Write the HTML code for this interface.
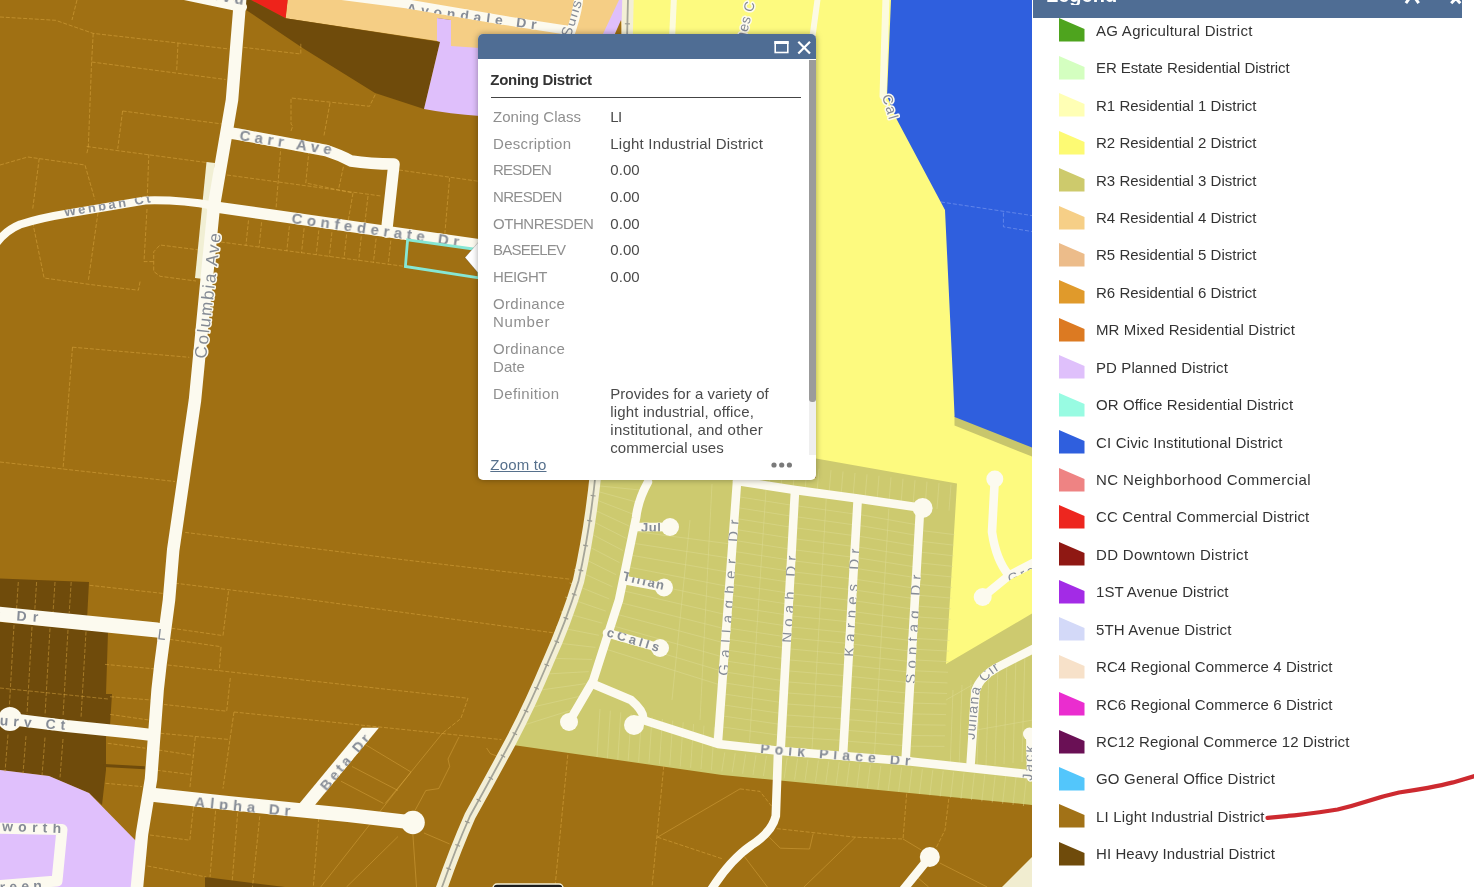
<!DOCTYPE html>
<html><head><meta charset="utf-8">
<style>
html,body{margin:0;padding:0;}
body{width:1474px;height:887px;overflow:hidden;position:relative;background:#fff;font-family:"Liberation Sans",sans-serif;}
#map{will-change:transform;position:absolute;left:0;top:0;width:1032px;height:887px;}
#legend{will-change:transform;position:absolute;left:1033px;top:0;width:441px;height:887px;background:#fff;}
#lhead{position:absolute;left:0;top:0;width:429px;height:17.5px;background:#4f6d94;overflow:hidden;}
.lrow{position:absolute;left:0;height:24px;}
.lrow svg{position:absolute;left:26px;top:0;}
.lrow span{position:absolute;left:63px;top:2.4px;white-space:nowrap;font-size:15px;color:#333;line-height:20px;letter-spacing:0.1px;}
#popup{will-change:transform;position:absolute;left:478px;top:34px;width:338px;height:446px;background:#fff;border-radius:5px;box-shadow:0 0 6px rgba(0,0,0,.35);overflow:hidden;}
#phead{position:absolute;left:0;top:0;width:338px;height:25px;background:#4f6d94;}
.pl{position:absolute;left:15px;font-size:15px;color:#8f8f8f;line-height:18px;white-space:nowrap;}
.pv{position:absolute;left:132px;font-size:15px;color:#4a4a4a;line-height:18px;white-space:nowrap;}
</style></head><body>
<svg id="map" width="1032" height="887" viewBox="0 0 1032 887">
<defs>
<style>
.rd{fill:none;stroke:#fcfaef;stroke-linecap:round;stroke-linejoin:round;}
.pl1{fill:none;stroke:#e3ae48;stroke-width:0.75;stroke-dasharray:4 1.8;opacity:.62;}
.pl2{fill:none;stroke:#dedb93;stroke-width:0.8;opacity:.6;}
.lb{font-family:"Liberation Sans",sans-serif;font-size:15px;fill:#848a94;stroke:#fcfaef;stroke-width:3px;paint-order:stroke;stroke-linejoin:round;font-weight:bold;}
</style>
</defs>
<rect x="0" y="0" width="1033" height="887" fill="#a07013"/>
<!-- R4 orange -->
<polygon points="287.5,0 626,0 626,60 451,60 451,20 437,18 437,41 285.6,18.3" fill="#f5ce85"/>
<!-- red -->
<polygon points="251,0 287.7,0 285.6,18.5" fill="#ee231b"/>
<!-- HI dark top -->
<polygon points="245,0 251,0 285.6,18.3 440,42 424,109 375,93 303,48.2 246.5,10.2" fill="#6f4b0b"/>
<!-- PD lavender top -->
<path d="M437,18 L451,20 L451,46 L480,48 L480,116 Q450,114 424,109 L440,42 L437,41Z" fill="#dfbffb"/>
<polygon points="619,0 624,0 622,20 614,36 602,36" fill="#dfbffb"/>
<polygon points="614,36 621,20 622,36" fill="#a07013"/>
<!-- R2 yellow -->
<polygon points="632,0 1033,0 1033,620 946,666 946,500 816,475 816,36 632,36" fill="#fdfa7f"/>
<!-- R3 olive -->
<path d="M594,478 L816,478 L816,458.5 L957,483.5 L946,664 L1033,613 L1033,805 L722,775 L513,745 Q535,705 548,662 Q568,620 578,581 Q588,530 594,478Z" fill="#cdca6f"/>
<!-- olive strip under blue -->
<polygon points="954.5,416 1033,447 1033,457 954.5,425.5" fill="#c8c66c"/>
<!-- CI blue -->
<polygon points="891,0 1033,0 1033,448 954.6,417 953,380 945,210 896,118 887,96" fill="#2f5fde"/>
<!-- HI dark bottom-left -->
<polygon points="0,578.5 89,582 87,620 0,612" fill="#6f4b0b"/>
<polygon points="0,622 108,632 106,694 112,694 110,726 106,726 106,770 102,805 89,793 49,776 0,770" fill="#6f4b0b"/>
<rect x="104" y="764" width="41" height="3" fill="#6f4b0b" transform="rotate(3 104 764)"/>
<polygon points="205,877 285,887 205,887" fill="#6f4b0b"/>
<!-- PD lavender bottom-left -->
<path d="M0,770 L49,776 L89,793 L137,842 L133,887 L0,887Z" fill="#e0c0fc"/>
<!-- cream bottom-right -->
<polygon points="1002,887 1033,856 1033,887" fill="#f1edd0"/>
<path class="pl1" d="M0.0,17.0 L55.6,20.3 L93.2,33.4 L178.0,43.0 L229.0,49.0 M77.0,0.0 L72.0,20.0 M93.2,33.4 L91.6,62.0 L88.3,147.0 L86.7,154.0 M91.6,62.0 L225.6,79.5 M178.0,43.0 L176.6,72.0 M122.6,111.0 L222.4,124.0 M122.6,111.0 L117.7,148.8 M86.7,146.5 L209.3,162.9 M148.8,154.3 L147.2,199.5 M0.0,165.0 L27.8,157.0 L85.0,165.0 L94.8,199.5 M39.2,158.6 L32.7,209.0 M32.7,222.4 L44.1,278.0 L90.0,284.5 L138.4,290.2 L140.4,280.0 M98.0,212.6 L88.3,281.0 M147.0,209.0 L144.0,261.6 L153.7,261.6 M199.5,250.0 L160.0,245.0 L153.7,251.8 L153.7,271.4 L160.0,276.3 L196.0,281.0 M243.6,47.4 L300.8,54.0 L300.8,42.5 M291.0,131.0 L292.7,126.0 L291.0,124.0 L291.0,98.0 L369.5,106.3 L376.0,93.0 M330.0,103.0 L323.7,137.0 M227.0,175.0 L381.0,196.0 M281.0,145.5 L276.0,209.0 M309.0,150.4 L305.8,183.0 L353.0,193.0 L348.0,222.0 M343.4,166.8 L338.5,189.7 M368.0,196.0 L364.6,225.6 M399.0,170.0 L480.0,181.5 M449.6,178.0 L444.7,235.4 M220.7,242.0 L405.5,266.5 M248.5,220.4 L245.9,245.7 M261.6,222.3 L259.0,247.4 M289.4,226.2 L286.8,251.1 M304.1,228.3 L301.5,253.1 M318.8,230.4 L316.2,255.0 M331.9,232.3 L329.3,256.8 M346.6,234.4 L344.0,258.7 M361.3,236.4 L358.7,260.7 M376.1,238.5 L373.4,262.6 M390.8,240.6 L388.2,264.6 M72.5,347.2 L189.3,357.3 M72.5,347.2 L63.0,469.3 M0.0,462.0 L175.0,481.5 M185.2,532.4 L405.5,560.0 L570.0,579.2 M89.5,585.3 L162.8,593.4 M175.0,583.2 L293.0,597.5 L560.0,633.7 M18.3,582.0 L16.3,613.0 M36.6,582.0 L34.6,613.0 M55.0,582.0 L53.0,613.0 M71.2,582.0 L69.2,613.0 M14.0,625.1 L9.0,712.8 M32.0,626.7 L27.0,714.1 M50.0,628.3 L45.0,715.4 M68.0,629.9 L63.0,716.6 M86.0,631.6 L81.0,717.9 M0.0,688.0 L108.0,699.0 M8.0,734.6 L5.0,771.8 M26.0,736.1 L23.0,773.6 M45.0,737.6 L42.0,775.5 M63.0,739.0 L60.0,777.3 M228.5,591.3 L223.0,635.6 L171.3,628.2 M169.5,639.3 L221.0,646.7 L219.3,670.6 M167.7,665.0 L468.0,698.3 L460.8,718.6 L442.4,733.3 M230.3,678.0 L226.7,711.2 L164.0,704.5 M234.0,712.0 L501.4,739.6 M234.0,712.0 L230.3,737.0 L223.0,788.6 M160.3,733.3 L230.3,739.6 M195.3,737.0 L189.8,788.6 M158.4,750.0 L193.5,755.4 M156.6,770.2 L191.6,774.6 M193.5,807.0 L189.8,840.2 L147.4,834.7 M215.6,810.7 L210.0,877.0 M237.7,812.6 L232.2,880.8 M259.8,816.3 L252.5,887.0 M147.4,866.0 L206.4,877.0 M318.8,818.0 L313.3,887.0 M110.0,696.7 L151.0,700.0 M110.0,714.4 L148.8,720.0 M107.7,743.3 L145.4,748.2 M105.5,783.3 L142.0,786.6 M105.0,664.4 L154.0,668.8 M567.8,754.8 L555.0,887.0 M663.8,765.8 L652.0,887.0 M740.0,788.9 L760.0,791.4 L773.0,808.0 M657.5,837.2 L723.5,859.2 M771.0,828.0 L855.4,837.2 L903.0,839.0 L906.7,793.3 M948.8,798.8 L945.0,830.0 L936.0,848.2"/>
<path class="pl1" style="stroke-dasharray:none;opacity:.55" d="M365.0,744.4 L411.0,772.0 L385.2,803.4 M352.0,766.5 L398.0,790.5 M341.0,781.2 L383.4,803.4 M442.4,733.3 L411.0,772.0 L320.7,887.0 M459.0,737.0 L448.0,759.0 L449.7,766.5 L438.7,788.6 L425.8,790.5 L412.9,814.4 M486.6,748.0 L490.3,753.6 L505.0,759.0 M424.0,833.0 L449.7,844.0 M412.9,834.7 L416.5,887.0 M398.0,836.5 L346.5,887.0 M657.5,837.2 L740.0,788.9 M769.3,837.2 L780.3,848.2 L809.6,849.0 L813.2,833.6 M743.6,855.5 L767.4,887.0 M855.4,837.2 L804.0,887.0 M903.0,839.0 L921.3,850.0 M939.6,862.9 L987.2,887.0 M917.6,877.5 L928.6,887.0"/>
<path d="M941,202 L1033,215.7 M1003.4,212.7 L1003.4,226.8 L1033,231.7" fill="none" stroke="#7d9bf0" stroke-width="0.8" stroke-dasharray="4 2" opacity=".8"/>
<polygon points="206.5,162 215,163 203.5,279 195,278" fill="#f1efd4"/>
<path class="pl2" d="M740.2,497.0 L790.4,505.0 M739.3,507.9 L789.8,515.9 M738.5,518.9 L789.2,526.9 M737.7,529.8 L788.6,537.8 M736.9,540.8 L788.0,548.8 M736.0,551.7 L787.3,559.7 M735.2,562.7 L786.7,570.7 M734.4,573.7 L786.1,581.7 M733.6,584.6 L785.5,592.6 M732.7,595.6 L784.9,603.6 M731.9,606.5 L784.3,614.5 M731.1,617.5 L783.7,625.5 M730.3,628.4 L783.1,636.4 M729.4,639.4 L782.5,647.4 M728.6,650.3 L781.9,658.3 M727.8,661.3 L781.3,669.3 M727.0,672.3 L780.7,680.3 M726.1,683.2 L780.0,691.2 M725.3,694.2 L779.4,702.2 M724.5,705.1 L778.8,713.1 M723.7,716.1 L778.2,724.1 M722.8,727.0 L777.6,735.0 M766.0,490.0 L749.5,742.0 M798.4,506.0 L852.9,513.8 M797.8,517.0 L852.2,524.6 M797.2,528.0 L851.6,535.3 M796.6,539.0 L851.0,546.1 M796.0,550.0 L850.3,556.9 M795.3,561.0 L849.7,567.7 M794.7,572.0 L849.1,578.5 M794.1,583.0 L848.5,589.3 M793.5,594.0 L847.8,600.0 M792.9,605.0 L847.2,610.8 M792.3,616.0 L846.6,621.6 M791.7,627.0 L845.9,632.4 M791.1,638.0 L845.3,643.2 M790.5,649.0 L844.7,654.0 M789.9,660.0 L844.0,664.7 M789.3,671.0 L843.4,675.5 M788.7,682.0 L842.8,686.3 M788.0,693.0 L842.2,697.1 M787.4,704.0 L841.5,707.9 M786.8,715.0 L840.9,718.7 M786.2,726.0 L840.3,729.4 M785.6,737.0 L839.6,740.2 M826.2,499.0 L812.0,749.5 M860.9,514.8 L915.4,524.5 M860.2,525.6 L914.8,535.0 M859.6,536.3 L914.2,545.6 M859.0,547.1 L913.6,556.1 M858.3,557.9 L913.0,566.6 M857.7,568.7 L912.3,577.1 M857.1,579.5 L911.7,587.7 M856.5,590.3 L911.1,598.2 M855.8,601.0 L910.5,608.7 M855.2,611.8 L909.9,619.2 M854.6,622.6 L909.3,629.7 M853.9,633.4 L908.7,640.3 M853.3,644.2 L908.1,650.8 M852.7,655.0 L907.5,661.3 M852.0,665.7 L906.9,671.8 M851.4,676.5 L906.3,682.3 M850.8,687.3 L905.7,692.9 M850.2,698.1 L905.0,703.4 M849.5,708.9 L904.4,713.9 M848.9,719.7 L903.8,724.4 M848.3,730.4 L903.2,735.0 M847.6,741.2 L902.6,745.5 M888.8,509.0 L874.5,754.0 M923.4,530.8 L954.5,534.6 M922.7,541.5 L954.0,545.2 M922.1,552.3 L953.5,555.8 M921.5,563.1 L953.0,566.4 M920.8,573.9 L952.5,577.0 M920.2,584.6 L952.0,587.5 M919.5,595.4 L951.5,598.1 M918.9,606.2 L951.0,608.7 M918.3,617.0 L950.5,619.3 M917.6,627.7 L950.0,629.9 M917.0,638.5 L949.5,640.5 M916.4,649.3 L949.0,651.1 M915.7,660.0 L948.5,661.7 M915.1,670.8 L948.0,672.3 M914.5,681.6 L947.5,682.9 M913.8,692.4 L947.0,693.5 M913.2,703.1 L946.5,704.0 M912.5,713.9 L946.0,714.6 M911.9,724.7 L945.5,725.2 M911.3,735.5 L945.0,735.8 M910.6,746.2 L944.5,746.4 M747.0,460.0 L745.0,482.0 M759.0,461.4 L757.0,483.7 M771.0,462.9 L769.0,485.4 M783.0,464.3 L781.0,487.0 M795.0,465.8 L793.0,488.7 M807.0,467.2 L805.0,490.4 M819.0,468.6 L817.0,492.1 M831.0,470.1 L829.0,493.8 M843.0,471.5 L841.0,495.4 M855.0,473.0 L853.0,497.1 M867.0,474.4 L865.0,498.8 M879.0,475.8 L877.0,500.5 M891.0,477.3 L889.0,502.2 M903.0,478.7 L901.0,503.8 M915.0,480.2 L913.0,505.5 M927.0,481.6 L925.0,507.2 M939.0,483.0 L937.0,508.9 M951.0,484.5 L949.0,510.6 M636.7,531.7 L732.1,544.2 M633.3,543.3 L731.2,558.3 M630.0,555.0 L730.2,572.5 M626.7,566.7 L729.3,586.7 M623.3,578.3 L728.4,600.8 M620.0,590.0 L727.5,615.0 M616.7,601.7 L726.6,629.2 M613.3,613.3 L725.7,643.3 M610.0,625.0 L724.8,657.5 M606.7,636.7 L723.8,671.7 M603.3,648.3 L722.9,685.8 M690.0,520.0 L672.0,700.0 M712.0,484.0 L700.0,720.0 M600.0,709.0 L597.0,757.0 M610.4,710.7 L607.4,758.2 M620.8,712.3 L617.8,759.4 M631.2,714.0 L628.2,760.6 M641.6,715.7 L638.6,761.8 M652.0,717.3 L649.0,763.0 M662.4,719.0 L659.4,764.2 M672.8,720.6 L669.8,765.4 M683.2,722.3 L680.2,766.6 M693.6,724.0 L690.6,767.8 M704.0,725.6 L701.0,769.0 M714.4,727.3 L711.4,770.2 M724.8,752.4 L721.8,771.4 M735.2,753.3 L732.2,772.5 M745.6,754.2 L742.6,773.7 M756.0,755.1 L753.0,774.9 M766.4,755.9 L763.4,776.1 M776.8,756.8 L773.8,777.3 M787.2,757.7 L784.2,778.5 M797.6,758.6 L794.6,779.7 M808.0,759.5 L805.0,780.9 M818.4,760.4 L815.4,782.1 M828.8,761.2 L825.8,783.3 M839.2,762.1 L836.2,784.5 M849.6,763.0 L846.6,785.7 M860.0,763.9 L857.0,786.9 M870.4,764.8 L867.4,788.1 M880.8,765.7 L877.8,789.3 M891.2,766.6 L888.2,790.5 M901.6,767.4 L898.6,791.7 M912.0,768.3 L909.0,792.9 M922.4,769.2 L919.4,794.1 M932.8,770.1 L929.8,795.3 M943.2,771.0 L940.2,796.5 M953.6,771.9 L950.6,797.7 M964.0,772.7 L961.0,798.9 M974.4,773.6 L971.4,800.1 M984.8,774.5 L981.8,801.3 M995.2,775.4 L992.2,802.4 M1005.6,776.3 L1002.6,803.6 M1016.0,777.2 L1013.0,804.8 M1026.4,778.0 L1023.4,806.0 M600.0,486.0 L640.0,490.0 M598.3,491.6 L636.6,502.1 M595.7,499.7 L633.2,514.2 M592.7,509.2 L629.7,526.3 M589.4,519.8 L626.3,538.4 M585.9,531.1 L622.9,550.5 M582.1,543.2 L619.5,562.6 M578.2,555.9 L616.1,574.7 M574.0,569.2 L612.6,586.8 M569.7,582.9 L609.2,598.9 M565.3,597.1 L605.8,611.1 M560.7,611.8 L602.4,623.2 M556.0,626.9 L598.9,635.3 M551.2,642.3 L595.5,647.4 M546.2,658.1 L592.1,659.5 M541.2,674.3 L588.7,671.6 M536.0,690.7 L585.3,683.7 M530.8,707.5 L581.8,695.8 M525.4,724.6 L578.4,707.9 M950.0,770.0 L953.0,690.0 M959.0,769.0 L962.0,685.0 M968.0,768.0 L971.0,680.0 M977.0,767.0 L980.0,675.0 M986.0,766.0 L989.0,670.0 M995.0,765.0 L998.0,665.0 M1004.0,764.0 L1007.0,660.0 M1013.0,763.0 L1016.0,655.0 M1022.0,762.0 L1025.0,650.0 M1031.0,761.0 L1034.0,645.0 M946.0,700.0 L1033.0,650.0 M976.0,730.0 L1033.0,720.0"/>

<g id="roadsg">
<!-- rail -->
<g id="rail">
<path id="railp" d="M628,-2 L627,40 M596,470 Q590,530 578.5,581 Q566,622 548,662 Q530,705 510.5,742 Q490,780 470,816 Q455,850 441,890" fill="none" stroke="#f3efd6" stroke-width="11.5"/>
<path d="M628,-2 L627,40 M596,470 Q590,530 578.5,581 Q566,622 548,662 Q530,705 510.5,742 Q490,780 470,816 Q455,850 441,890" fill="none" stroke="#a5a598" stroke-width="1.8"/>
<path d="M628,-2 L627,40 M596,470 Q590,530 578.5,581 Q566,622 548,662 Q530,705 510.5,742 Q490,780 470,816 Q455,850 441,890" fill="none" stroke="#9a9a90" stroke-width="5" stroke-dasharray="1.2 24"/>
</g>
<!-- top roads -->
<path class="rd" d="M330,-6 L408,4 L502,20 L566,30" stroke-width="9"/>
<path class="rd" d="M579,-4 Q577,18 567,42" stroke-width="9"/>
<path class="rd" d="M674,-4 L672,40" stroke-width="6" opacity=".85"/>
<path class="rd" d="M818,-4 L812,40" stroke-width="6" opacity=".9"/>
<path class="rd" d="M886,-4 L883,96" stroke-width="7" opacity=".85"/>
<!-- Columbia Ave -->
<path class="rd" d="M170,-8 L242,7" stroke-width="10"/>
<path class="rd" d="M240.5,-5 L232,100 L214,205 L206.6,280 L195,400 L173.2,550 L169,600 L160.5,664 L157.6,690 L151,779 L142,834 L136.5,892" stroke-width="12.5"/>
<!-- Confederate / Wenban -->
<path id="wenb" class="rd" d="M-8,250 Q2,232 20,224.5 Q40,218 68,213.5 L145,200.5 Q180,199.5 214,205.8" stroke-width="8"/>
<path class="rd" d="M212,206.5 L480,244.9" stroke-width="11.3"/>
<!-- Carr Ave -->
<path class="rd" d="M230,133 L237,134 L326,150.5 Q340,155 351,161 Q370,164 394,164 L386.5,232" stroke-width="11.5"/>
<!-- bottom-left roads -->
<path class="rd" d="M-8,613.5 L157,630" stroke-width="15"/>
<path class="rd" d="M10,719 L66.6,726 L133,732.7 L152,735" stroke-width="12"/>
<circle cx="10" cy="719" r="12" fill="#fcfaef"/>
<path class="rd" d="M150,794.5 L228,803 L348,815 L413,822.5" stroke-width="14"/>
<circle cx="413" cy="822.5" r="11.8" fill="#fcfaef"/>
<polygon points="362.1,727.8 378.9,727.8 309,812.2 299,803.9" fill="#fcfaef"/>
<!-- lavender roads -->
<path class="rd" d="M-6,828 L62,829.5 L57,881 L-6,886" stroke-width="11"/>
<!-- subdivision roads -->
<g class="rd" stroke-width="8.6">
<path d="M648,482 Q638,500 636,518 L619,600 L593,681 L569,722"/>
<path d="M636,527 L670,527"/>
<path d="M624,580 L664,587.5"/>
<path d="M607,633 L660,648"/>
<path d="M593,684 L631,700 Q645,712 643,720 L718,744 L780.6,751 L906,761 L1035,775"/>
<path d="M634,725 L643,718"/>
<path d="M737,482 L718,741"/>
<path d="M795,491 L780.6,750"/>
<path d="M857.6,501 L843,755"/>
<path d="M737,481 L795,490 L857.6,498.5 L922.6,508"/>
<path d="M920,510.5 L905.7,759"/>
<path d="M970.7,763 L975.5,691 Q980,676 1000,666 L1035,648"/>
<path d="M778,753.5 L775.8,816 Q772,832 751.7,845 Q730,860 711,890"/>
<path d="M929.8,857 L903,890"/>
<path d="M1030.5,778 L1029.5,735" stroke-width="7"/>
<path d="M994.8,479 L992,532 Q996,560 1009,575.5 L982.7,597 M1009,575.5 L1035,562"/>
</g>
<g fill="#fcfaef">
<circle cx="670" cy="527" r="9"/><circle cx="664" cy="587.5" r="9"/><circle cx="660" cy="648" r="9"/>
<circle cx="569" cy="722" r="9"/><circle cx="634" cy="725" r="10"/><circle cx="922.6" cy="508" r="10"/>
<circle cx="929.8" cy="857" r="10"/><circle cx="994.8" cy="479" r="8.5"/><circle cx="982.7" cy="597" r="9"/>
<circle cx="1029.5" cy="734" r="6.5"/>
</g>

</g>
<mask id="rm" maskUnits="userSpaceOnUse" x="0" y="0" width="1033" height="887"><use href="#roadsg"/></mask>
<text class="lb" x="740" y="60" transform="rotate(-75.3 740 60)" style="font-size:14px;font-weight:normal;letter-spacing:0.62px">James C</text>
<text class="lb" x="882" y="96" transform="rotate(73.7 882 96)" style="font-size:14px;font-weight:normal;letter-spacing:1.99px">Cal</text>
<text class="lb" x="206" y="359" transform="rotate(-83.2 206 359)" style="font-size:17px;font-weight:normal;letter-spacing:1.94px">Columbia Ave</text>
<g mask="url(#rm)"><text class="lb" x="199" y="-3" transform="rotate(10.3 199 -3)" style="font-size:15px;font-weight:bold;letter-spacing:4.07px">Blvd</text>
<text class="lb" x="406" y="13" transform="rotate(7.2 406 13)" style="font-size:14px;font-weight:bold;letter-spacing:4.91px">Avondale Dr</text>
<text class="lb" x="570.5" y="38" transform="rotate(-72.3 570.5 38)" style="font-size:15px;font-weight:normal;letter-spacing:1.16px">Sunset</text>
<text class="lb" x="239" y="139.8" transform="rotate(9.1 239 139.8)" style="font-size:15px;font-weight:bold;letter-spacing:4.54px">Carr Ave</text>
<text class="lb" x="291" y="223.4" transform="rotate(8.1 291 223.4)" style="font-size:15px;font-weight:bold;letter-spacing:4.68px">Confederate Dr</text>
<text class="lb" x="157" y="639" transform="rotate(7.1 157 639)" style="font-size:15px;font-weight:normal;letter-spacing:-0.28px">L</text>
<text class="lb" x="-8" y="619" transform="rotate(3.7 -8 619)" style="font-size:14px;font-weight:bold;letter-spacing:6.29px">y Dr</text>
<text class="lb" x="-14" y="724" transform="rotate(4.3 -14 724)" style="font-size:14px;font-weight:bold;letter-spacing:5.04px">bury Ct</text>
<text class="lb" x="2" y="831" transform="rotate(1.9 2 831)" style="font-size:14px;font-weight:bold;letter-spacing:5.23px">worth</text>
<text class="lb" x="0" y="892" transform="rotate(-2.7 0 892)" style="font-size:14px;font-weight:bold;letter-spacing:4.16px">reen</text>
<text class="lb" x="194" y="807" transform="rotate(5.4 194 807)" style="font-size:15px;font-weight:bold;letter-spacing:4.84px">Alpha Dr</text>
<text class="lb" x="326.5" y="791.5" transform="rotate(-49.8 326.5 791.5)" style="font-size:14px;font-weight:bold;letter-spacing:3.05px">Beta Dr</text>
<text class="lb" x="641" y="532" transform="rotate(0.0 641 532)" style="font-size:13px;font-weight:bold;letter-spacing:0.60px">Jul</text>
<text class="lb" x="622" y="580" transform="rotate(13.7 622 580)" style="font-size:13px;font-weight:bold;letter-spacing:1.41px">Tiffan</text>
<text class="lb" x="606" y="636" transform="rotate(17.1 606 636)" style="font-size:13px;font-weight:bold;letter-spacing:3.22px">cCalls</text>
<text class="lb" x="728.4" y="676" transform="rotate(-85.9 728.4 676)" style="font-size:15px;font-weight:normal;letter-spacing:6.49px">Gallagher Dr</text>
<text class="lb" x="792" y="643" transform="rotate(-86.7 792 643)" style="font-size:15px;font-weight:normal;letter-spacing:5.21px">Noah Dr</text>
<text class="lb" x="854" y="657" transform="rotate(-86.7 854 657)" style="font-size:15px;font-weight:normal;letter-spacing:5.08px">Karnes Dr</text>
<text class="lb" x="915.4" y="684" transform="rotate(-86.7 915.4 684)" style="font-size:15px;font-weight:normal;letter-spacing:5.20px">Sontag Dr</text>
<text class="lb" x="760" y="753" transform="rotate(5.0 760 753)" style="font-size:14px;font-weight:bold;letter-spacing:5.09px">Polk Place Dr</text>
<text class="lb" x="1010" y="584" transform="rotate(-21.0 1010 584)" style="font-size:14px;font-weight:normal;letter-spacing:2.26px">Gro</text>
<text class="lb" x="1032" y="781" transform="rotate(-85.9 1032 781)" style="font-size:14px;font-weight:normal;letter-spacing:2.10px">Jack</text>
<path id="jul" d="M974.5,740 L979,695 Q982,677 1012,663" fill="none"/>
<text class="lb" style="font-size:14px;font-weight:normal;letter-spacing:1.3px"><textPath href="#jul">Juliana Cir</textPath></text></g>
<polygon points="407.6,239.8 479,249.8 479,277.8 405.4,266.5" fill="none" stroke="#86e7d4" stroke-width="2.8"/>
<rect x="493" y="884" width="70" height="12" rx="4" fill="#1c1c1c" stroke="#f4f0d8" stroke-width="1.5"/>
<mask id="wm"><path d="M-8,250 Q2,232 20,224.5 Q40,218 68,213.5 L145,200.5 Q180,199.5 214,205.8" stroke="#fff" stroke-width="7.4" fill="none"/></mask><g mask="url(#wm)"><text x="64.5" y="216.6" transform="rotate(-9.4 64.5 216.6)" style="font-family:'Liberation Sans',sans-serif;font-size:13px;font-weight:bold;letter-spacing:2.50px" fill="#8b919b">Wenban Ct</text></g>

</svg>
<div id="legend">
<div id="lhead"></div>
<svg style="position:absolute;left:13px;top:-7px" width="90" height="12"><text x="0" y="9" font-family="Liberation Sans" font-weight="bold" font-size="20" fill="#fff">Legend</text></svg>
<svg style="position:absolute;left:368px;top:0" width="70" height="8"><path d="M11.3,-6 L4.9,3.2 M11.3,-6 L17.7,3.2" stroke="#fff" stroke-width="3" fill="none"/><path d="M58,-5 L50.2,3.2 M51.5,-5 L59.3,3.2" stroke="#fff" stroke-width="3" fill="none"/></svg>
<div class="lrow" style="top:18.4px"><svg width="26" height="24"><polygon points="0,0 25.5,11 25.5,23.5 0,23.5" fill="#4ea41e"/></svg><span style="letter-spacing:0.277px">AG Agricultural District</span></div>
<div class="lrow" style="top:55.83px"><svg width="26" height="24"><polygon points="0,0 25.5,11 25.5,23.5 0,23.5" fill="#d4ffc0"/></svg><span style="letter-spacing:-0.077px">ER Estate Residential District</span></div>
<div class="lrow" style="top:93.25999999999999px"><svg width="26" height="24"><polygon points="0,0 25.5,11 25.5,23.5 0,23.5" fill="#ffffb5"/></svg><span style="letter-spacing:0.018px">R1 Residential 1 District</span></div>
<div class="lrow" style="top:130.69px"><svg width="26" height="24"><polygon points="0,0 25.5,11 25.5,23.5 0,23.5" fill="#fdfa73"/></svg><span style="letter-spacing:0.018px">R2 Residential 2 District</span></div>
<div class="lrow" style="top:168.12px"><svg width="26" height="24"><polygon points="0,0 25.5,11 25.5,23.5 0,23.5" fill="#cdca6c"/></svg><span style="letter-spacing:0.018px">R3 Residential 3 District</span></div>
<div class="lrow" style="top:205.55px"><svg width="26" height="24"><polygon points="0,0 25.5,11 25.5,23.5 0,23.5" fill="#f6cf87"/></svg><span style="letter-spacing:0.018px">R4 Residential 4 District</span></div>
<div class="lrow" style="top:242.98px"><svg width="26" height="24"><polygon points="0,0 25.5,11 25.5,23.5 0,23.5" fill="#ecbc8a"/></svg><span style="letter-spacing:0.018px">R5 Residential 5 District</span></div>
<div class="lrow" style="top:280.40999999999997px"><svg width="26" height="24"><polygon points="0,0 25.5,11 25.5,23.5 0,23.5" fill="#e09a2b"/></svg><span style="letter-spacing:0.018px">R6 Residential 6 District</span></div>
<div class="lrow" style="top:317.84px"><svg width="26" height="24"><polygon points="0,0 25.5,11 25.5,23.5 0,23.5" fill="#dc7a22"/></svg><span style="letter-spacing:0.107px">MR Mixed Residential District</span></div>
<div class="lrow" style="top:355.27px"><svg width="26" height="24"><polygon points="0,0 25.5,11 25.5,23.5 0,23.5" fill="#dfc0fb"/></svg><span style="letter-spacing:0.097px">PD Planned District</span></div>
<div class="lrow" style="top:392.7px"><svg width="26" height="24"><polygon points="0,0 25.5,11 25.5,23.5 0,23.5" fill="#98fbe2"/></svg><span style="letter-spacing:0.108px">OR Office Residential District</span></div>
<div class="lrow" style="top:430.13px"><svg width="26" height="24"><polygon points="0,0 25.5,11 25.5,23.5 0,23.5" fill="#2f5fde"/></svg><span style="letter-spacing:0.161px">CI Civic Institutional District</span></div>
<div class="lrow" style="top:467.55999999999995px"><svg width="26" height="24"><polygon points="0,0 25.5,11 25.5,23.5 0,23.5" fill="#ee8383"/></svg><span style="letter-spacing:0.409px">NC Neighborhood Commercial</span></div>
<div class="lrow" style="top:504.98999999999995px"><svg width="26" height="24"><polygon points="0,0 25.5,11 25.5,23.5 0,23.5" fill="#ed261f"/></svg><span style="letter-spacing:0.168px">CC Central Commercial District</span></div>
<div class="lrow" style="top:542.42px"><svg width="26" height="24"><polygon points="0,0 25.5,11 25.5,23.5 0,23.5" fill="#8f1813"/></svg><span style="letter-spacing:0.326px">DD Downtown District</span></div>
<div class="lrow" style="top:579.85px"><svg width="26" height="24"><polygon points="0,0 25.5,11 25.5,23.5 0,23.5" fill="#a32be6"/></svg><span style="letter-spacing:0.074px">1ST Avenue District</span></div>
<div class="lrow" style="top:617.28px"><svg width="26" height="24"><polygon points="0,0 25.5,11 25.5,23.5 0,23.5" fill="#d3d9f8"/></svg><span style="letter-spacing:0.169px">5TH Avenue District</span></div>
<div class="lrow" style="top:654.7099999999999px"><svg width="26" height="24"><polygon points="0,0 25.5,11 25.5,23.5 0,23.5" fill="#f7e1c9"/></svg><span style="letter-spacing:0.097px">RC4 Regional Commerce 4 District</span></div>
<div class="lrow" style="top:692.14px"><svg width="26" height="24"><polygon points="0,0 25.5,11 25.5,23.5 0,23.5" fill="#ea2dcf"/></svg><span style="letter-spacing:0.097px">RC6 Regional Commerce 6 District</span></div>
<div class="lrow" style="top:729.5699999999999px"><svg width="26" height="24"><polygon points="0,0 25.5,11 25.5,23.5 0,23.5" fill="#6a1055"/></svg><span style="letter-spacing:0.100px">RC12 Regional Commerce 12 District</span></div>
<div class="lrow" style="top:767.0px"><svg width="26" height="24"><polygon points="0,0 25.5,11 25.5,23.5 0,23.5" fill="#53c6fb"/></svg><span style="letter-spacing:0.195px">GO General Office District</span></div>
<div class="lrow" style="top:804.43px"><svg width="26" height="24"><polygon points="0,0 25.5,11 25.5,23.5 0,23.5" fill="#a27217"/></svg><span style="letter-spacing:0.159px">LI Light Industrial District</span></div>
<div class="lrow" style="top:841.86px"><svg width="26" height="24"><polygon points="0,0 25.5,11 25.5,23.5 0,23.5" fill="#6f4b0b"/></svg><span style="letter-spacing:0.081px">HI Heavy Industrial District</span></div>
<svg style="position:absolute;left:220px;top:765px" width="221" height="70"><path d="M14.5,52.8 L41.3,50.3 Q70,47 84.6,44.5 Q100,41 113.4,36.6 Q130,31 146,27.5 Q160,25.5 174.8,22.9 Q190,20 200,17.4 L222,11" fill="none" stroke="#cd2a30" stroke-width="4.2" stroke-linecap="round"/></svg>
</div>
<svg id="ptr" style="position:absolute;left:460px;top:238px" width="20" height="40"><polygon points="19,3.5 19,36 5,19.5" fill="#fff" stroke="rgba(0,0,0,.18)" stroke-width="1"/></svg>
<div id="popup">
<div id="phead"></div>
<svg style="position:absolute;left:294px;top:5px" width="42" height="16"><rect x="3.2" y="3" width="12.6" height="10.5" fill="none" stroke="#fff" stroke-width="1.6"/><rect x="2.4" y="2" width="14.2" height="3" fill="#fff"/><path d="M26.3,2.8 L38,14.5 M38,2.8 L26.3,14.5" stroke="#fff" stroke-width="2.2" fill="none"/></svg>
<div style="position:absolute;left:12.300000000000011px;top:37px;font-size:15px;font-weight:bold;color:#333;line-height:18px;letter-spacing:-0.289px;white-space:nowrap">Zoning District</div>
<div style="position:absolute;left:13px;top:63px;width:310px;height:1.4px;background:#444"></div>
<div class="pl" style="left:15.0px;top:73.5px;letter-spacing:0.038px">Zoning Class</div>
<div class="pv" style="left:132.3px;top:73.5px;letter-spacing:-0.608px">LI</div>
<div class="pl" style="left:15.0px;top:100.5px;letter-spacing:0.306px">Description</div>
<div class="pv" style="left:132.3px;top:100.5px;letter-spacing:0.214px">Light Industrial District</div>
<div class="pl" style="left:15.0px;top:126.8px;letter-spacing:-0.753px">RESDEN</div>
<div class="pv" style="left:132.3px;top:126.8px;letter-spacing:0.049px">0.00</div>
<div class="pl" style="left:15.0px;top:153.5px;letter-spacing:-0.651px">NRESDEN</div>
<div class="pv" style="left:132.3px;top:153.5px;letter-spacing:0.049px">0.00</div>
<div class="pl" style="left:15.0px;top:180.5px;letter-spacing:-0.462px">OTHNRESDEN</div>
<div class="pv" style="left:132.3px;top:180.5px;letter-spacing:0.049px">0.00</div>
<div class="pl" style="left:15.0px;top:207.0px;letter-spacing:-0.774px">BASEELEV</div>
<div class="pv" style="left:132.3px;top:207.0px;letter-spacing:0.049px">0.00</div>
<div class="pl" style="left:15.0px;top:233.5px;letter-spacing:-0.445px">HEIGHT</div>
<div class="pv" style="left:132.3px;top:233.5px;letter-spacing:0.049px">0.00</div>
<div class="pl" style="left:15.0px;top:260.5px;letter-spacing:0.331px">Ordinance</div>
<div class="pl" style="left:15.0px;top:278.5px;letter-spacing:0.607px">Number</div>
<div class="pl" style="left:15.0px;top:305.5px;letter-spacing:0.331px">Ordinance</div>
<div class="pl" style="left:15.0px;top:323.5px;letter-spacing:0.078px">Date</div>
<div class="pl" style="left:15.0px;top:350.5px;letter-spacing:0.405px">Definition</div>
<div class="pv" style="left:132.3px;top:350.5px;letter-spacing:0.037px">Provides for a variety of</div>
<div class="pv" style="left:132.3px;top:368.5px;letter-spacing:0.156px">light industrial, office,</div>
<div class="pv" style="left:132.3px;top:386.5px;letter-spacing:0.247px">institutional, and other</div>
<div class="pv" style="left:132.3px;top:404.5px;letter-spacing:0.058px">commercial uses</div>
<div style="position:absolute;left:12.300000000000011px;top:421.5px;font-size:15px;color:#56708c;text-decoration:underline;line-height:18px;letter-spacing:0.167px;white-space:nowrap">Zoom to</div>
<div style="position:absolute;left:292.5px;top:428px;width:22px;height:6px;line-height:0"><svg width="22" height="6" style="display:block"><circle cx="3" cy="3" r="2.6" fill="#7a7a7a"/><circle cx="10.7" cy="3" r="2.6" fill="#7a7a7a"/><circle cx="18.4" cy="3" r="2.6" fill="#7a7a7a"/></svg></div>
<div style="position:absolute;left:331px;top:26px;width:7px;height:395px;background:#efefef"></div>
<div style="position:absolute;left:331px;top:26px;width:7px;height:342px;background:#9b9b9b;border-radius:0 0 3px 3px"></div>
</div>
</body></html>
